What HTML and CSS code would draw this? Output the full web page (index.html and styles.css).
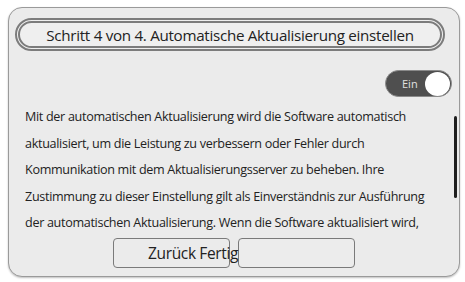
FILE: index.html
```html
<!DOCTYPE html>
<html lang="de">
<head>
<meta charset="utf-8">
<link rel="stylesheet" href="styles.css">
</head>
<body>
<div class="frame">
  <div class="title">Schritt 4 von 4. Automatische Aktualisierung einstellen</div>
  <div class="toggle-row">
    <div class="toggle"><span class="toggle-label">Ein</span><span class="knob"></span></div>
  </div>
  <div class="scroll">
    <p class="text">Mit der automatischen Aktualisierung wird die Software automatisch<br>aktualisiert, um die Leistung zu verbessern oder Fehler durch<br>Kommunikation mit dem Aktualisierungsserver zu beheben. Ihre<br>Zustimmung zu dieser Einstellung gilt als Einverständnis zur Ausführung<br>der automatischen Aktualisierung. Wenn die Software aktualisiert wird,<br>werden Sie vorher benachrichtigt.</p>
    <div class="thumb"></div>
  </div>
  <div class="buttons">
    <div class="btn btn-back">Zurück Fertig</div>
    <div class="btn btn-done"></div>
  </div>
</div>
</body>
</html>
```
FILE: styles.css
```css
html, body {
  margin: 0;
  padding: 0;
  background: #ffffff;
}
body {
  font-family: "Open Sans", "Noto Sans", sans-serif;
  color: #222;
  padding: 7px 5px 5px 8px;
  width: 465px;
  height: 282px;
  box-sizing: border-box;
}
.frame {
  position: relative;
  width: 452px;
  height: 270px;
  box-sizing: border-box;
  border: 1px solid #9a9a9a;
  border-radius: 14px;
  background: #ebebeb;
  box-shadow: 0 1px 2px rgba(0,0,0,0.25);
  display: flex;
  flex-direction: column;
  padding: 10px 14px 0 6px;
}
.title {
  height: 33px;
  box-sizing: border-box;
  border: 5px double #7c7c7c;
  border-radius: 17px;
  background: #efefef;
  display: flex;
  align-items: center;
  justify-content: center;
  font-size: 15.2px;
  letter-spacing: -0.3px;
  color: #222;
}
.toggle-row {
  display: flex;
  justify-content: flex-end;
  margin-top: 19px;
  margin-right: -7px;
}
.toggle {
  width: 67px;
  height: 27px;
  box-sizing: border-box;
  border-radius: 14px;
  background: #4f4f4f;
  border: 1.5px solid #8a8a8a;
  display: flex;
  align-items: center;
  justify-content: space-between;
  padding: 0 1px 0 16px;
}
.toggle-label {
  color: #e0e0e0;
  font-size: 11px;
}
.knob {
  width: 25px;
  height: 24px;
  border-radius: 50%;
  background: #ffffff;
}
.scroll {
  height: 133px;
  overflow: hidden;
  margin-top: 7px;
  padding-left: 10px;
}
.text {
  margin: 0;
  font-size: 12.6px;
  line-height: 26.6px;
  letter-spacing: -0.32px;
  white-space: nowrap;
  color: #222;
}
.thumb {
  position: absolute;
  right: 2px;
  top: 108px;
  width: 3px;
  height: 82px;
  border-radius: 2px;
  background: #1e1e1e;
}
.buttons {
  display: flex;
  justify-content: center;
  gap: 8px;
  margin-top: 1px;
  margin-left: 8px;
}
.btn {
  width: 117px;
  height: 30px;
  box-sizing: border-box;
  border: 1.5px solid #7a7a7a;
  border-radius: 4px;
  background: #ececec;
  display: flex;
  align-items: center;
  font-size: 15.5px;
  letter-spacing: -0.35px;
  white-space: nowrap;
  color: #222;
}
.btn-back {
  padding-left: 34px;
  position: relative;
  z-index: 1;
  background: transparent;
}
```
